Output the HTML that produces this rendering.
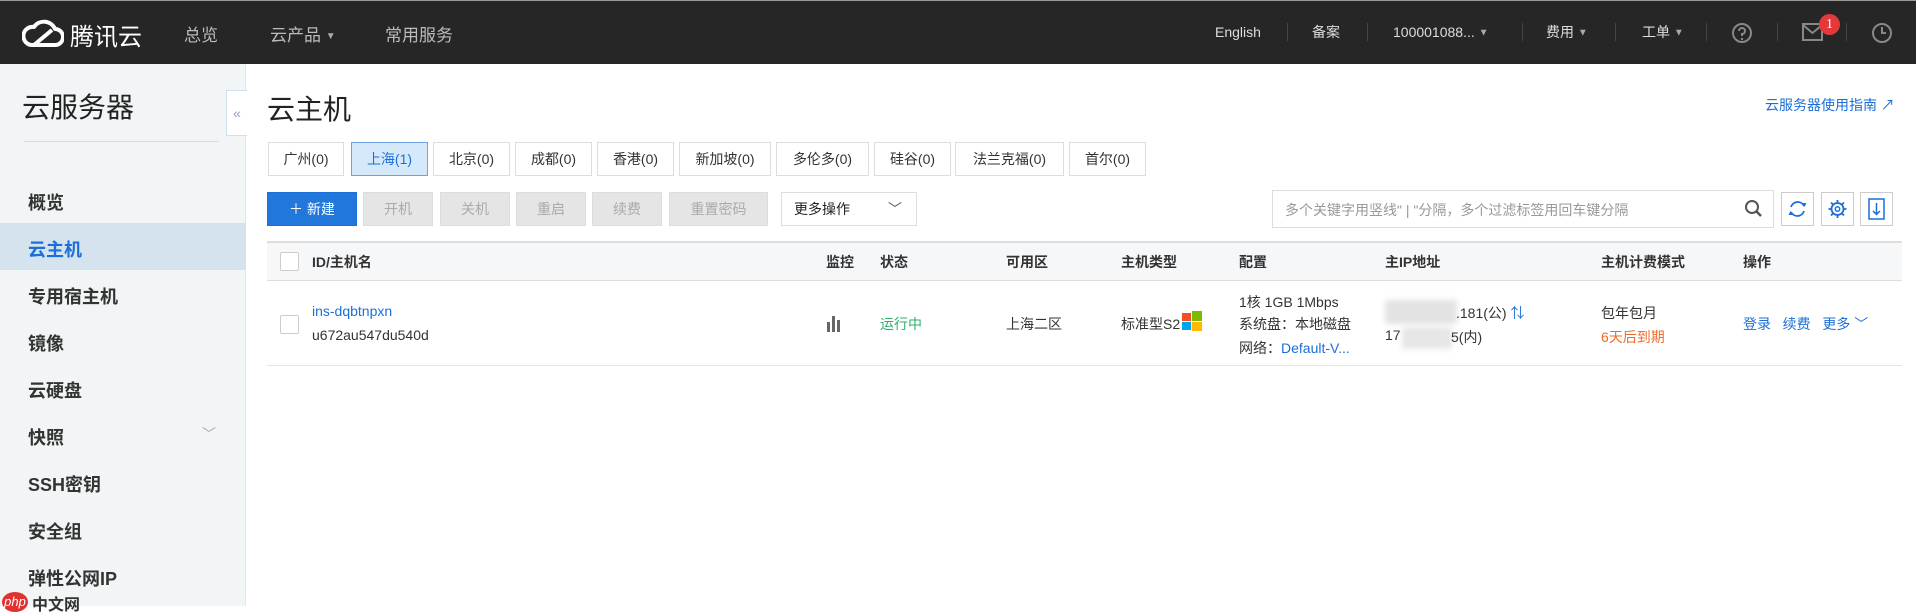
<!DOCTYPE html>
<html><head><meta charset="utf-8"><style>
*{margin:0;padding:0;box-sizing:border-box}
body{width:1916px;height:606px;overflow:hidden;background:#fff;font-family:"Liberation Sans","Noto Sans CJK SC",sans-serif;font-size:14px;color:#333;position:relative}
.a{position:absolute;white-space:nowrap}
#hd{position:absolute;left:0;top:0;width:1916px;height:64px;background:#262626;border-top:1px solid #999}
.nav{color:#bbb;font-size:17px;top:20px}
.rn{color:#ddd;font-size:14px;top:22px;line-height:18px}
.sep{position:absolute;top:22px;width:1px;height:18px;background:#444}
.tri{font-size:10px;color:#aaa;vertical-align:middle}
#sb{position:absolute;left:0;top:64px;width:246px;height:542px;background:#f1f5f6;border-right:1px solid #e1e6ea}
.mi{left:28px;font-size:18px;font-weight:bold;color:#333}
.tab{position:absolute;top:142px;height:34px;border:1px solid #ddd;background:#fff;font-size:14px;text-align:center;line-height:32px;color:#333}
.btn{position:absolute;top:192px;height:34px;background:#e5e5e5;border:1px solid #ddd;color:#aaa;text-align:center;line-height:32px;font-size:14px}
.ib{position:absolute;top:192px;width:33px;height:34px;border:1px solid #ccc;background:#fff}
.th{top:252px;font-size:14px;font-weight:bold;color:#333}
.cb{position:absolute;width:19px;height:19px;border:1px solid #ccc;border-radius:2px;background:#fff}
.blue{color:#1c6fd9}
.td{font-size:14px;color:#333}
</style></head><body>
<div id="hd">
<svg class="a" style="left:22px;top:15px" width="42" height="32" viewBox="0 0 42 32"><path d="M9 29 H33 A8 8 0 0 0 33 13 A12 12 0 0 0 12 11 A9 9 0 0 0 9 29 Z M12 29 L30 14" fill="none" stroke="#fff" stroke-width="4" stroke-linejoin="round"/></svg>
<div class="a" style="left:70px;top:16px;color:#fff;font-size:24px">腾讯云</div>
<div class="a nav" style="left:184px">总览</div>
<div class="a nav" style="left:270px">云产品 <span class="tri">▼</span></div>
<div class="a nav" style="left:385px">常用服务</div>
<div class="a rn" style="left:1215px">English</div><div class="sep" style="left:1287px"></div>
<div class="a rn" style="left:1312px">备案</div><div class="sep" style="left:1367px"></div>
<div class="a rn" style="left:1393px">100001088... <span class="tri">▼</span></div><div class="sep" style="left:1522px"></div>
<div class="a rn" style="left:1546px">费用 <span class="tri">▼</span></div><div class="sep" style="left:1615px"></div>
<div class="a rn" style="left:1642px">工单 <span class="tri">▼</span></div><div class="sep" style="left:1706px"></div>
<svg class="a" style="left:1731px;top:21px" width="22" height="22" viewBox="0 0 22 22"><circle cx="11" cy="11" r="9" fill="none" stroke="#888" stroke-width="2"/><path d="M8 9 A3 3 0 1 1 11 12 V14" fill="none" stroke="#888" stroke-width="2"/><circle cx="11" cy="17" r="1.2" fill="#888"/></svg>
<div class="sep" style="left:1777px"></div>
<svg class="a" style="left:1802px;top:22px" width="21" height="18" viewBox="0 0 21 18"><rect x="1" y="1" width="19" height="16" fill="none" stroke="#888" stroke-width="2"/><path d="M1 2 L10.5 10 L20 2" fill="none" stroke="#888" stroke-width="2"/></svg>
<div class="a" style="left:1819px;top:13px;width:21px;height:21px;border-radius:50%;background:#e5383b;color:#fff;font-size:14px;text-align:center;line-height:21px;font-family:'Liberation Serif',serif">1</div>
<div class="sep" style="left:1846px"></div>
<svg class="a" style="left:1871px;top:21px" width="22" height="22" viewBox="0 0 22 22"><circle cx="11" cy="11" r="9" fill="none" stroke="#888" stroke-width="2"/><path d="M11 5 V11 H15" fill="none" stroke="#888" stroke-width="2"/></svg>
</div>
<div id="sb">
<div class="a" style="left:22px;top:22px;font-size:28px;color:#222">云服务器</div>
<div class="a" style="left:24px;top:77px;width:195px;height:1px;background:#d5dde3"></div>
<div class="a" style="left:226px;top:26px;width:21px;height:46px;background:#fff;border:1px solid #cfe0ee;border-right:none;color:#99b;font-size:14px;text-align:center;line-height:44px">«</div>
<div class="a mi" style="top:125px">概览</div>
<div class="a" style="left:0;top:159px;width:246px;height:47px;background:#d5e3ef"></div>
<div class="a mi" style="top:172px;color:#1c6fd9">云主机</div>
<div class="a mi" style="top:219px">专用宿主机</div>
<div class="a mi" style="top:266px">镜像</div>
<div class="a mi" style="top:313px">云硬盘</div>
<div class="a mi" style="top:360px">快照</div>
<div class="a" style="left:202px;top:360px;color:#aaa;font-size:14px">﹀</div>
<div class="a mi" style="top:407px">SSH密钥</div>
<div class="a mi" style="top:454px">安全组</div>
<div class="a mi" style="top:501px">弹性公网IP</div>
<div class="a" style="left:2px;top:528px;width:26px;height:20px;border-radius:50%;background:#e0322f;color:#fff;font-size:13px;font-style:italic;text-align:center;line-height:19px">php</div>
<div class="a" style="left:32px;top:527px;font-size:16px;font-weight:bold;color:#333">中文网</div>
</div>

<div class="a" style="left:267px;top:88px;font-size:28px;color:#222">云主机</div>
<div class="a blue" style="left:1765px;top:95px;font-size:14px">云服务器使用指南 ↗</div>

<div class="tab" style="left:268px;width:76px">广州(0)</div>
<div class="tab" style="left:351px;width:77px;background:#d5e9fb;border-color:#6aa6e5;color:#1c6fd9">上海(1)</div>
<div class="tab" style="left:433px;width:77px">北京(0)</div>
<div class="tab" style="left:515px;width:77px">成都(0)</div>
<div class="tab" style="left:597px;width:77px">香港(0)</div>
<div class="tab" style="left:679px;width:92px">新加坡(0)</div>
<div class="tab" style="left:776px;width:93px">多伦多(0)</div>
<div class="tab" style="left:874px;width:77px">硅谷(0)</div>
<div class="tab" style="left:955px;width:109px">法兰克福(0)</div>
<div class="tab" style="left:1069px;width:77px">首尔(0)</div>

<div class="btn" style="left:267px;width:90px;background:#2277da;border-color:#1c6fd9;color:#fff">＋ 新建</div>
<div class="btn" style="left:363px;width:70px">开机</div>
<div class="btn" style="left:440px;width:70px">关机</div>
<div class="btn" style="left:516px;width:70px">重启</div>
<div class="btn" style="left:592px;width:70px">续费</div>
<div class="btn" style="left:669px;width:99px">重置密码</div>
<div class="btn" style="left:781px;width:136px;background:#fff;color:#222;text-align:left;padding-left:12px">更多操作<span style="position:absolute;right:14px;color:#555">﹀</span></div>

<div class="a" style="left:1272px;top:190px;width:502px;height:38px;border:1px solid #ddd;background:#fff"></div>
<div class="a" style="left:1285px;top:200px;color:#999;font-size:14px">多个关键字用竖线" | "分隔，多个过滤标签用回车键分隔</div>
<svg class="a" style="left:1744px;top:199px" width="20" height="20" viewBox="0 0 20 20"><circle cx="8" cy="8" r="6" fill="none" stroke="#555" stroke-width="2"/><path d="M12.5 12.5 L17 17" stroke="#555" stroke-width="2.5"/></svg>
<div class="ib" style="left:1781px"><svg width="31" height="32" viewBox="0 0 31 32"><path d="M9 14 A7 7 0 0 1 22 13 M22 18 A7 7 0 0 1 9 19" fill="none" stroke="#1c6fd9" stroke-width="1.8"/><path d="M20 10 L22.5 14 L24.5 10 Z M11 22 L8.5 18 L6.5 22Z" fill="#1c6fd9"/></svg></div>
<div class="ib" style="left:1821px"><svg width="31" height="32" viewBox="0 0 31 32"><circle cx="15.5" cy="16" r="6" fill="none" stroke="#1c6fd9" stroke-width="1.8"/><circle cx="15.5" cy="16" r="2.2" fill="none" stroke="#1c6fd9" stroke-width="1.5"/><path d="M15.5 7v3M15.5 22v3M6.5 16h3M21.5 16h3M9 9.5l2 2M20 20.5l2 2M9 22.5l2-2M20 11.5l2-2" stroke="#1c6fd9" stroke-width="1.8"/></svg></div>
<div class="ib" style="left:1860px"><svg width="31" height="32" viewBox="0 0 31 32"><rect x="8" y="6" width="15" height="20" fill="none" stroke="#1c6fd9" stroke-width="1.5"/><path d="M15.5 10 V21 M12 18 L15.5 21.5 L19 18" fill="none" stroke="#1c6fd9" stroke-width="1.5"/></svg></div>

<div class="a" style="left:267px;top:241px;width:1635px;height:40px;background:#f6f7f9;border-top:2px solid #ddd;border-bottom:1px solid #ddd"></div>
<div class="cb" style="left:280px;top:252px"></div>
<div class="a th" style="left:312px">ID/主机名</div>
<div class="a th" style="left:826px">监控</div>
<div class="a th" style="left:880px">状态</div>
<div class="a th" style="left:1006px">可用区</div>
<div class="a th" style="left:1121px">主机类型</div>
<div class="a th" style="left:1239px">配置</div>
<div class="a th" style="left:1385px">主IP地址</div>
<div class="a th" style="left:1601px">主机计费模式</div>
<div class="a th" style="left:1743px">操作</div>

<div class="a" style="left:267px;top:365px;width:1635px;height:1px;background:#e5e5e5"></div>
<div class="cb" style="left:280px;top:315px"></div>
<div class="a blue" style="left:312px;top:303px;font-size:14px">ins-dqbtnpxn</div>
<div class="a td" style="left:312px;top:327px">u672au547du540d</div>
<svg class="a" style="left:826px;top:315px" width="16" height="17" viewBox="0 0 16 17"><rect x="1" y="7" width="3" height="10" fill="#666"/><rect x="6" y="1" width="3" height="16" fill="#666"/><rect x="11" y="5" width="3" height="12" fill="#666"/></svg>
<div class="a" style="left:880px;top:314px;color:#2cb069;font-size:14px">运行中</div>
<div class="a td" style="left:1006px;top:314px">上海二区</div>
<div class="a td" style="left:1121px;top:314px">标准型S2</div>
<svg class="a" style="left:1182px;top:311px" width="20" height="20" viewBox="0 0 20 20"><rect x="0" y="2" width="9" height="8" fill="#f25022"/><rect x="10" y="0" width="10" height="10" fill="#7fba00"/><rect x="0" y="11" width="9" height="8" fill="#00a4ef"/><rect x="10" y="11" width="10" height="9" fill="#ffb900"/></svg>
<div class="a td" style="left:1239px;top:292px">1核 1GB 1Mbps</div>
<div class="a td" style="left:1239px;top:314px">系统盘：本地磁盘</div>
<div class="a td" style="left:1239px;top:338px">网络：<span class="blue">Default-V...</span></div>
<div class="a" style="left:1385px;top:300px;width:72px;height:24px;background:#e3e3e3;filter:blur(3px)"></div>
<div class="a td" style="left:1456px;top:303px">.181(公) <span class="blue">⇅</span></div>
<div class="a td" style="left:1385px;top:327px">17</div>
<div class="a" style="left:1402px;top:327px;width:50px;height:22px;background:#e6e6e6;filter:blur(3px)"></div>
<div class="a td" style="left:1451px;top:327px">5(内)</div>
<div class="a td" style="left:1601px;top:303px">包年包月</div>
<div class="a" style="left:1601px;top:327px;color:#f06a2a;font-size:14px">6天后到期</div>
<div class="a blue" style="left:1743px;top:314px">登录 &nbsp; 续费 &nbsp; 更多 ﹀</div>
</body></html>
